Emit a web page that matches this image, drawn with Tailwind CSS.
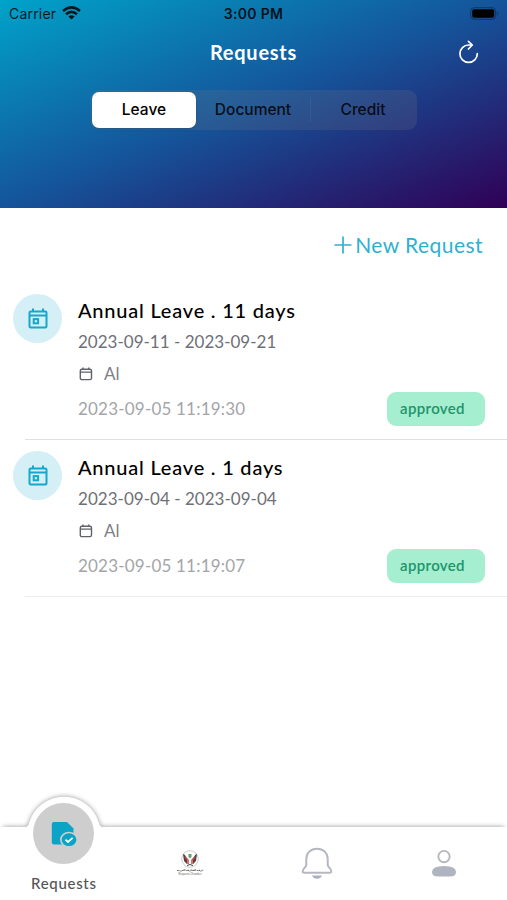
<!DOCTYPE html>
<html lang="en">
<head>
<meta charset="utf-8">
<title>Requests</title>
<script src="https://cdn.jsdelivr.net/npm/@tailwindcss/browser@4"></script>
</head>
<body class="bg-white">
<svg class="hidden">
  <symbol id="event" viewBox="0 0 24 24" fill="none" stroke="currentColor" stroke-width="2">
    <rect x="3.500" y="4.500" width="17" height="16" rx="1.200"/><path d="M3.500 8.500h17M7 1.500v3M17 1.500v3"/><rect x="7.700" y="12.100" width="4.400" height="4.200"/>
  </symbol>
  <symbol id="cal" viewBox="0 0 14 14" fill="none" stroke="currentColor" stroke-width="1.400">
    <rect x="1.300" y="2.200" width="11.200" height="10.400" rx="1.600"/><path d="M1.500 5.100h11M4 .5v2M9.800 .5v2"/>
  </symbol>
</svg>
<div class="w-[507px] h-[900px] flex flex-col overflow-hidden font-['Lato','Noto_Sans',sans-serif]">
  <header class="h-[208px] shrink-0 bg-[linear-gradient(to_bottom_right,#00a3c9,#15549a_50%,#300056)] flex flex-col items-center">
    <div class="w-full h-[26px] grid grid-cols-3 items-center pl-[9px] pr-[7px] text-[14px] text-black/85 font-['Inter',sans-serif]">
      <div class="flex items-center gap-[6px] tracking-[0.2px]">Carrier
        <svg class="w-[19px] h-[14px] -mt-[1px]" viewBox="0 0 19 14" fill="none" stroke="currentColor" stroke-width="2.500"><path d="M1 5Q9.500-2.300 18 5M4 8.200Q9.500 3.500 15 8.200"/><path d="M9.500 13.500L6.400 10.400Q9.500 8 12.600 10.400Z" fill="currentColor" stroke="none"/></svg>
      </div>
      <div class="text-center font-semibold tracking-[0.3px] pr-[2px]">3:00 PM</div>
      <svg class="justify-self-end w-[30px] h-[13px]" viewBox="0 0 30 13"><rect x=".7" y=".7" width="25" height="11.600" rx="3.500" fill="none" stroke="#000" stroke-opacity=".35"/><rect x="2.200" y="2.200" width="22" height="8.600" rx="2" fill="#000"/><path d="M27.300 4.500q2.200 2 0 4z" fill="#000" fill-opacity=".4"/></svg>
    </div>
    <div class="w-full h-[52px] grid grid-cols-[1fr_auto_1fr] items-center pr-[28px] pl-[28px]">
      <span></span>
      <h1 class="text-[20px] font-bold text-white tracking-[0.75px]">Requests</h1>
      <svg class="justify-self-end w-[21px] h-[24px]" viewBox="0 0 21 24" fill="none" stroke="#fff" stroke-width="1.700" stroke-linecap="round" stroke-linejoin="round"><path d="M19.300 13.700A8.700 8.700 0 1 1 10.600 5H14.300M10.400 1.300L14.300 5L10.400 9"/></svg>
    </div>
    <div class="mt-[12px] w-[327px] h-[40px] rounded-[9px] bg-[#767680]/20 p-[2px] flex items-center text-[15.500px] font-medium text-black/85 font-['Inter',sans-serif]">
      <div class="w-[104px] h-[36px] rounded-[7px] bg-white text-black flex items-center justify-center shadow-sm">Leave</div>
      <div class="w-[115px] text-center border-r border-white/5">Document</div>
      <div class="flex-1 text-center">Credit</div>
    </div>
  </header>
  <div class="h-[73px] shrink-0 flex items-center justify-end pr-[24px] text-[#2eb1d1] text-[21px] tracking-[0.450px]">
    <svg class="w-[18px] h-[18px] mr-[3px]" viewBox="0 0 18 18" stroke="currentColor" stroke-width="1.700"><path d="M9 .5v17M.5 9h17"/></svg>New Request
  </div>
  <main class="flex-1 pt-[2px]">
    <section class="h-[157px] flex relative pl-[13px] pr-[22px] pt-[11px]">
      <div class="size-[49px] rounded-full bg-[#d4eff6] text-[#14a8cb] flex items-center justify-center"><svg class="size-[24px]"><use href="#event"/></svg></div>
      <div class="ml-[16px] pt-[4px] flex-1">
        <h2 class="h-[24px] leading-[24px] text-[20px] font-medium text-black tracking-[0.780px]">Annual Leave . 11 days</h2>
        <p class="mt-[8px] h-[24px] leading-[24px] text-[17px] text-[#6e7077] tracking-[0.010px]">2023-09-11 - 2023-09-21</p>
        <p class="mt-[8px] h-[24px] flex items-center text-[17px] text-[#7d8087]"><svg class="size-[14px] mr-[11px] ml-[1px] text-[#5f6269]"><use href="#cal"/></svg>Al</p>
        <div class="mt-[6px] h-[34px] flex items-center justify-between">
          <time class="text-[17px] text-[#a3a5a9] tracking-[0.200px]">2023-09-05 11:19:30</time>
          <span class="w-[98px] h-[34px] rounded-[9px] bg-[#a5eecf] text-[#20946a] text-[15px] font-semibold flex items-center pl-[13px] pb-[1px] tracking-[0.350px]">approved</span>
        </div>
      </div>
      <div class="absolute left-[25px] right-0 bottom-0 h-px bg-[#dfe0e2]"></div>
    </section>
    <section class="h-[157px] flex relative pl-[13px] pr-[22px] pt-[11px]">
      <div class="size-[49px] rounded-full bg-[#d4eff6] text-[#14a8cb] flex items-center justify-center"><svg class="size-[24px]"><use href="#event"/></svg></div>
      <div class="ml-[16px] pt-[4px] flex-1">
        <h2 class="h-[24px] leading-[24px] text-[20px] font-medium text-black tracking-[0.780px]">Annual Leave . 1 days</h2>
        <p class="mt-[8px] h-[24px] leading-[24px] text-[17px] text-[#6e7077] tracking-[0.030px]">2023-09-04 - 2023-09-04</p>
        <p class="mt-[8px] h-[24px] flex items-center text-[17px] text-[#7d8087]"><svg class="size-[14px] mr-[11px] ml-[1px] text-[#5f6269]"><use href="#cal"/></svg>Al</p>
        <div class="mt-[6px] h-[34px] flex items-center justify-between">
          <time class="text-[17px] text-[#a3a5a9] tracking-[0.200px]">2023-09-05 11:19:07</time>
          <span class="w-[98px] h-[34px] rounded-[9px] bg-[#a5eecf] text-[#20946a] text-[15px] font-semibold flex items-center pl-[13px] pb-[1px] tracking-[0.350px]">approved</span>
        </div>
      </div>
      <div class="absolute left-[25px] right-0 bottom-0 h-px bg-[#ebecee]"></div>
    </section>
  </main>
  <nav class="h-[110px] shrink-0 relative">
    <svg class="absolute inset-0 w-[507px] h-[110px]" viewBox="0 0 507 110">
      <defs><filter id="s" x="-10%" y="-30%" width="120%" height="160%"><feGaussianBlur stdDeviation="2.500"/></filter></defs>
      <path d="M3 37H25Q28 37 29 33A36.500 36.500 0 0 1 99 33Q100 37 103 37H504V130H3Z" fill="#000" fill-opacity=".42" filter="url(#s)"/>
      <path d="M-10 37H25Q28 37 29 33A36.500 36.500 0 0 1 99 33Q100 37 103 37H517V130H-10Z" fill="#fff"/>
    </svg>
    <div class="relative h-full grid grid-cols-4">
      <div class="flex flex-col items-center pt-[13px] pl-[1px]">
        <div class="size-[61px] rounded-full bg-[#cecece] flex items-center justify-center">
          <svg class="w-[26px] h-[26px]" viewBox="0 0 26 26"><path d="M3 1H16L22.500 7.500V23.500H3Q.8 23.500 .8 21.300V3.200Q.8 1 3 1Z" fill="#0ba4c7"/><ellipse cx="18" cy="18.700" rx="8.200" ry="7.200" fill="#0ba4c7" stroke="#cecece" stroke-width="1.600"/><path d="M14.500 18.700l2.500 2.300 4.600-4.200" fill="none" stroke="#fff" stroke-width="1.700"/></svg>
        </div>
        <span class="mt-[9px] text-[15px] leading-[20px] font-medium text-[#555] tracking-[0.700px]">Requests</span>
      </div>
      <div class="flex flex-col items-center pt-[60px]">
        <svg class="w-[20px] h-[18px]" viewBox="0 0 20 18" fill="none"><circle cx="10" cy="9" r="8.300" stroke="#ccc"/><path d="M3 4q2 0 4 5v5l-3-3zM17 4q-2 0-4 5v5l3-3z" fill="#5a4141"/><path d="M5 7l3 3v4M15 7l-3 3v4" stroke="#c84646" stroke-width="1.500"/><path d="M8.500 4h3v3l-1.500 1.500L8.500 7z" fill="#6b9b76"/><path d="M7 15.500q3-2 6 0" stroke="#444"/></svg>
        <span dir="rtl" class="text-[2.600px] leading-[5px] font-bold text-[#333] whitespace-nowrap font-['Noto_Sans','DejaVu_Sans',sans-serif]">غرفة الشارقة العربية</span>
        <span class="text-[2.800px] leading-[3px] text-[#666] whitespace-nowrap">Requests Chamber</span>
      </div>
      <div class="flex justify-center pt-[57px]">
        <svg class="w-[32px] h-[33px]" viewBox="0 0 32 33"><path d="M16 1.700C9.500 1.700 5.300 6.100 5.300 12V17.500C5.300 20.500 1.700 21.200 1.700 24.300Q1.700 25.800 3.400 25.800H28.600Q30.300 25.800 30.300 24.300C30.300 21.200 26.700 20.500 26.700 17.500V12C26.700 6.100 22.500 1.700 16 1.700Z" fill="none" stroke="#b5b8c0" stroke-width="2"/><path d="M11 28.500H21Q19.500 31.700 16 31.700T11 28.500Z" fill="#adb1bb"/></svg>
      </div>
      <div class="flex justify-center pt-[59px]">
        <svg class="w-[26px] h-[28px]" viewBox="0 0 26 28"><circle cx="13" cy="7.600" r="5.700" fill="none" stroke="#b5b8c0" stroke-width="1.900"/><path d="M1 23Q1 17 13 17T25 23Q25 27.500 19 27.500H7Q1 27.500 1 23Z" fill="#b0b4c1"/></svg>
      </div>
    </div>
  </nav>
</div>
</body>
</html>
